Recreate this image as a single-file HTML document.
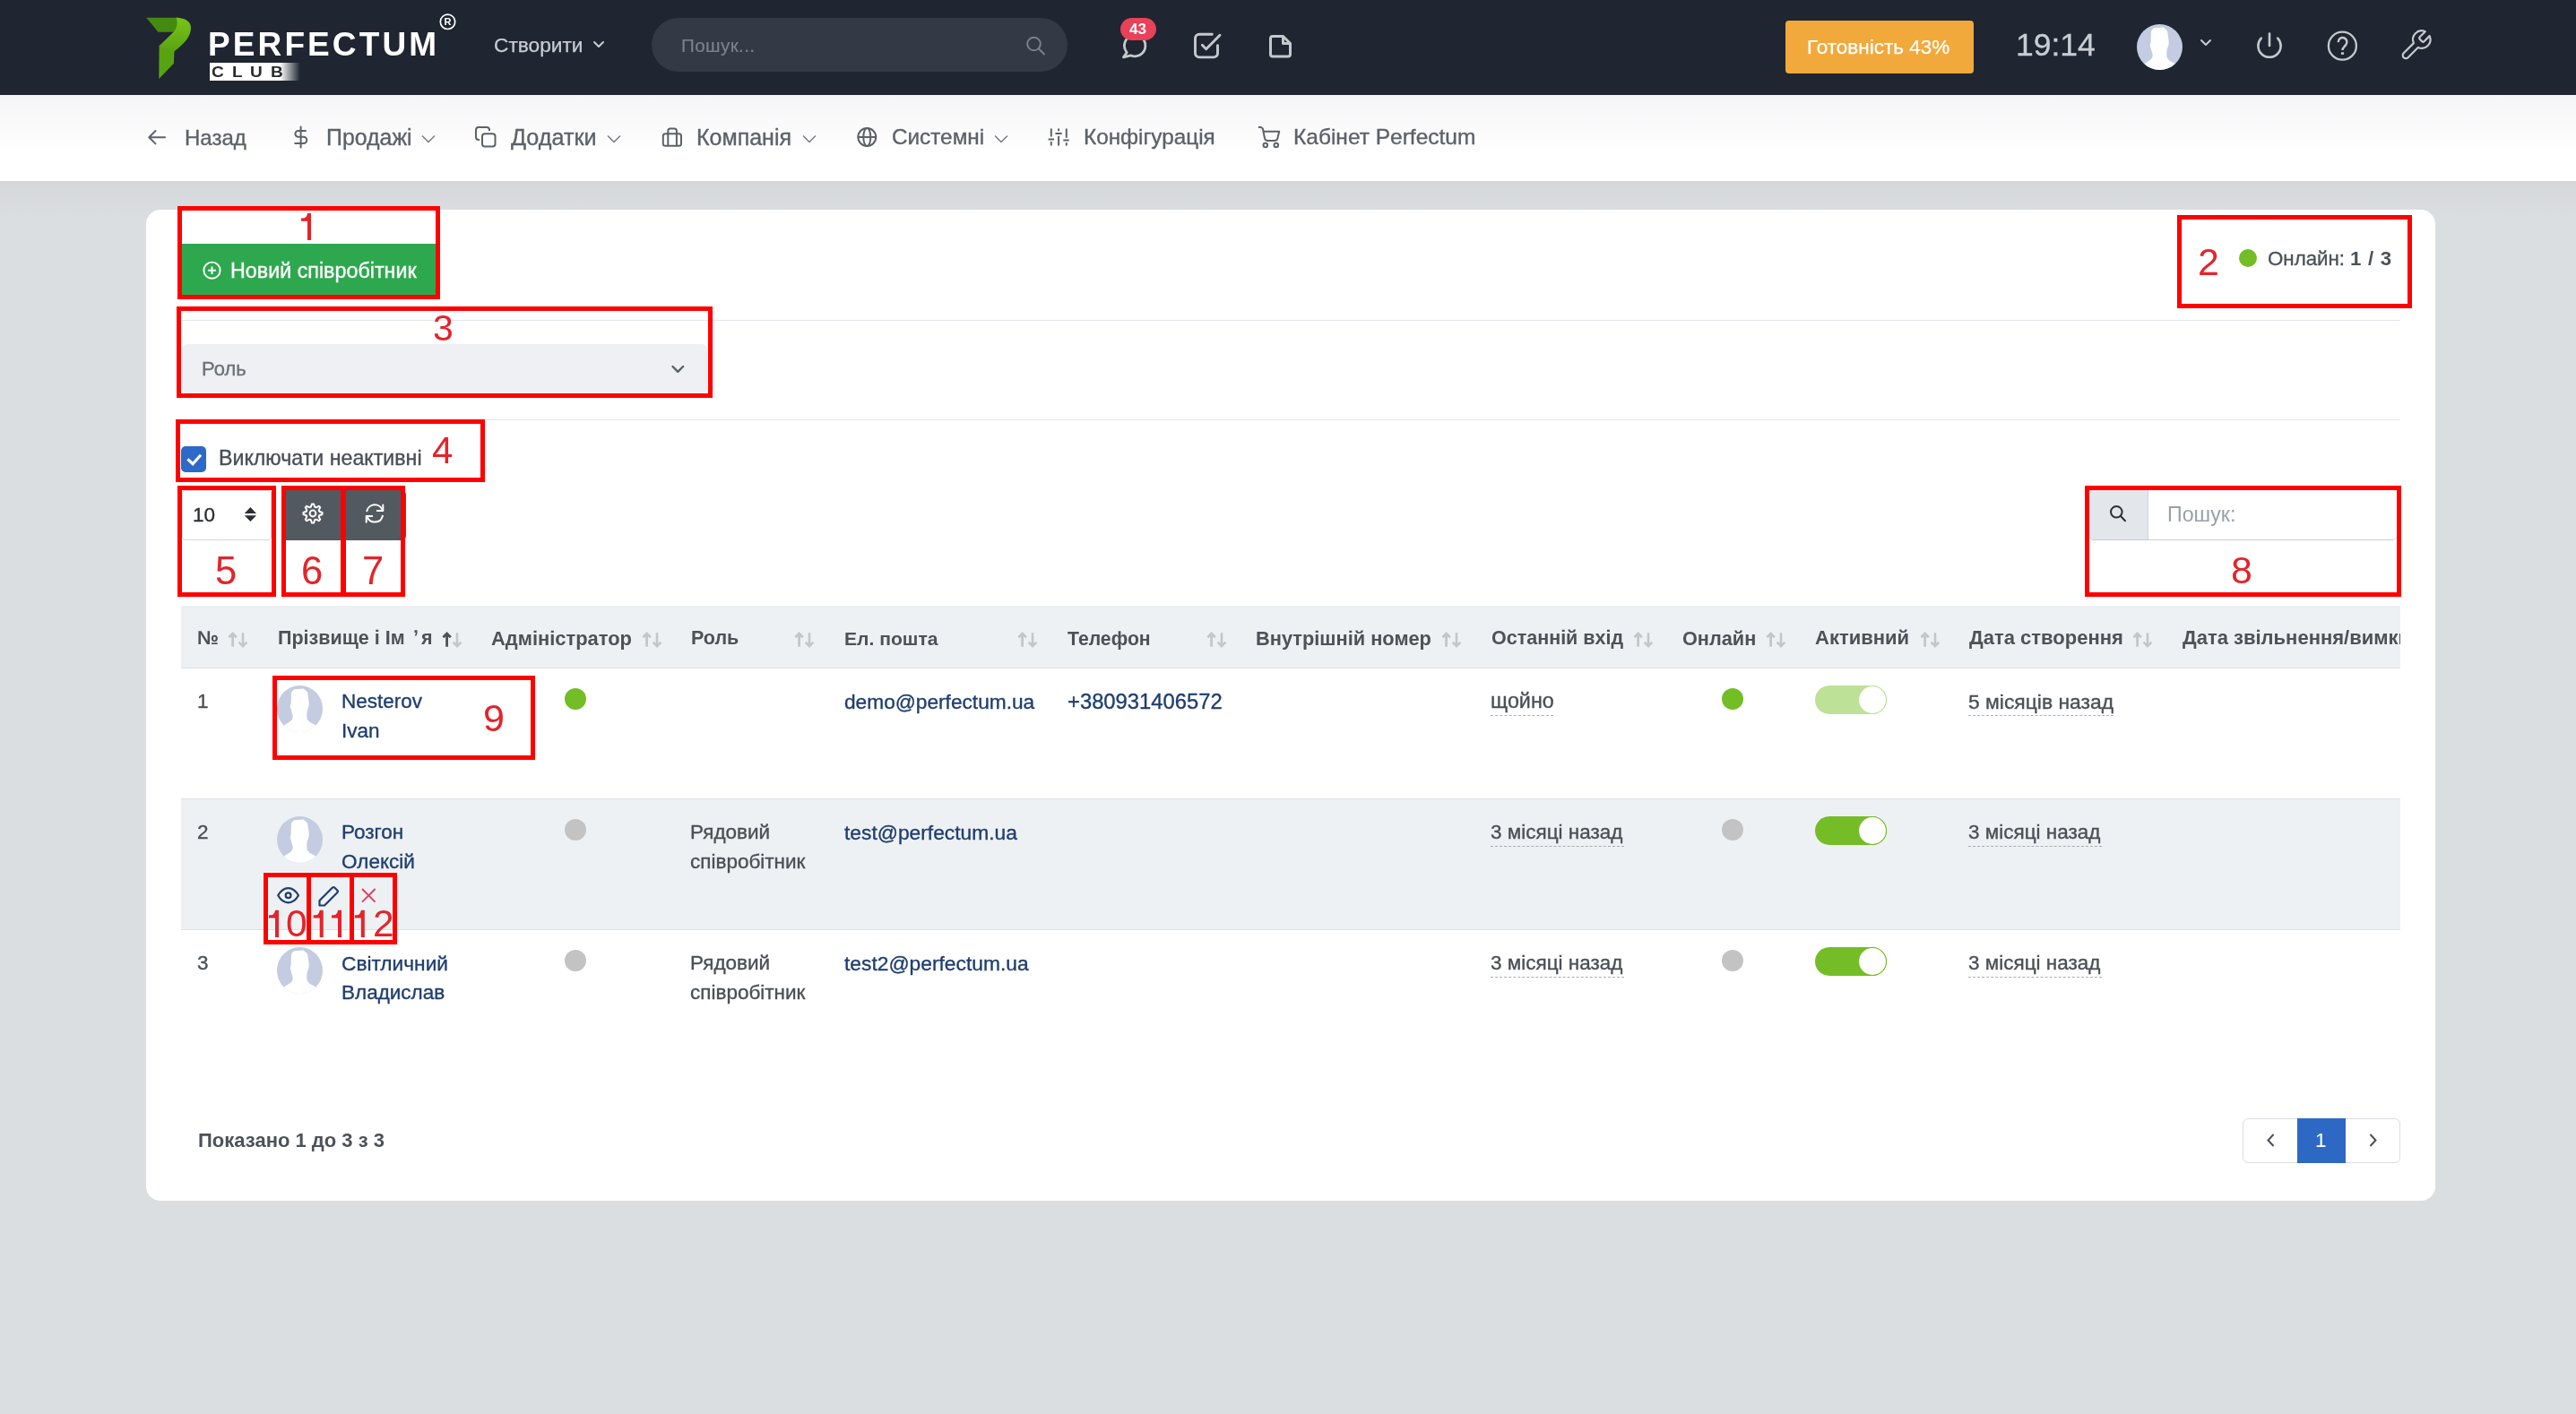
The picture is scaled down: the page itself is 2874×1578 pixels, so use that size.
<!DOCTYPE html><html><head><meta charset="utf-8"><style>
html,body{margin:0;padding:0;}
body{width:2874px;height:1578px;overflow:hidden;position:relative;font-family:"Liberation Sans",sans-serif;background:#d9dcdf}
.t{position:absolute;white-space:nowrap;line-height:1;will-change:transform}
.r{position:absolute}
</style></head><body>
<div class="r" style="left:0px;top:0px;width:2874px;height:106px;background:#1f2531"></div>
<div class="r" style="left:0px;top:106px;width:2874px;height:96px;background:linear-gradient(#f5f5f7,#fff 70%)"></div>
<div class="r" style="left:0px;top:202px;width:2874px;height:1376px;background:linear-gradient(#d5d7da,#dbdee0 40px)"></div>
<svg class="r" style="left:155px;top:12px;" width="80" height="84" viewBox="0 0 80 84"><defs><linearGradient id="lg1" x1="0" y1="0" x2="0" y2="1"><stop offset="0" stop-color="#79c41a"/><stop offset="1" stop-color="#5aa312"/></linearGradient></defs><path d="M22.6,38.5 L39.5,44 L38.9,58.8 L22.3,76 Z" fill="#58a312"/><path d="M8.3,7.7 L44,7.7 L44,23.8 L21.4,23.8 Z" fill="#458a10"/><path d="M41.6,7.7 C52,8 58,12 58,19 C58,28 52,36 39.2,45.4 L22.6,39.2 L38.6,23.8 C43,19.5 43.5,12 41.6,7.7 Z" fill="url(#lg1)"/></svg>
<div class="t" style="left:232.0px;top:30.7px;font-size:37px;color:#fff;font-weight:700;letter-spacing:3.1px">PERFECTUM</div>
<svg class="r" style="left:488px;top:13px;" width="23" height="23" viewBox="0 0 23 23"><circle cx="11.5" cy="11.3" r="8.2" fill="none" stroke="#fff" stroke-width="1.7"/><text x="11.6" y="15.3" text-anchor="middle" font-family="Liberation Sans" font-weight="700" font-size="11" fill="#fff">R</text></svg>
<div class="r" style="left:234px;top:70px;width:103px;height:20px;background:linear-gradient(90deg,#fff 0,#fff 76%,rgba(255,255,255,0) 98%)"></div>
<div class="t" style="left:236.2px;top:72.1px;font-size:17px;color:#2a2a2a;font-weight:700;transform:scaleX(1.12);transform-origin:0 0">C</div>
<div class="t" style="left:258.6px;top:72.1px;font-size:17px;color:#2a2a2a;font-weight:700;transform:scaleX(1.12);transform-origin:0 0">L</div>
<div class="t" style="left:279.3px;top:72.1px;font-size:17px;color:#2a2a2a;font-weight:700;transform:scaleX(1.12);transform-origin:0 0">U</div>
<div class="t" style="left:302.0px;top:72.1px;font-size:17px;color:#2a2a2a;font-weight:700;transform:scaleX(1.12);transform-origin:0 0">B</div>
<div class="t" style="left:551.0px;top:38.8px;font-size:22.7px;color:#c9cdd3;font-weight:400;-webkit-text-stroke:0.25px currentColor;">Створити</div>
<svg class="r" style="left:660px;top:44px;" width="16" height="12" viewBox="0 0 16 12"><path d="M3,3 L8,8 L13,3" fill="none" stroke="#c9cdd3" stroke-width="2" stroke-linecap="round" stroke-linejoin="round"/></svg>
<div class="r" style="left:727px;top:20px;width:464px;height:60px;background:#333a45;border-radius:30px"></div>
<div class="t" style="left:759.5px;top:40.6px;font-size:20.6px;color:#7b818a;font-weight:400;letter-spacing:0.4px;-webkit-text-stroke:0.2px currentColor;">Пошук...</div>
<svg class="r" style="left:1140px;top:36px;" width="30" height="30" viewBox="0 0 30 30"><circle cx="13.5" cy="13" r="7.3" fill="none" stroke="#7b818a" stroke-width="2"/><path d="M19,18.5 L25,24.5" stroke="#7b818a" stroke-width="2" stroke-linecap="round"/></svg>
<svg class="r" style="left:1246px;top:30px;" width="40" height="40" viewBox="0 0 40 40"><path d="M11.2,28.6 A11.7,11.7 0 1 1 15.5,31.8 L7.5,33.8 Z" fill="none" stroke="#c5c9ce" stroke-width="2.8" stroke-linejoin="round"/></svg>
<div class="r" style="left:1250px;top:20px;width:40px;height:25px;background:#e8415a;border-radius:13px"></div>
<div class="t" style="left:1260.0px;top:24.1px;font-size:17px;color:#fff;font-weight:700;">43</div>
<svg class="r" style="left:1326px;top:30px;" width="42" height="40" viewBox="0 0 42 40"><path d="M26.3,8.3 H12 A4.5,4.5 0 0 0 7.5,12.8 V29.4 A4.5,4.5 0 0 0 12,33.9 H28 A4.5,4.5 0 0 0 32.5,29.4 V20.6" fill="none" stroke="#c5c9ce" stroke-width="2.9" stroke-linecap="round"/><path d="M15.3,20.3 L19.7,24.7 L35,9.3" fill="none" stroke="#c5c9ce" stroke-width="2.9" stroke-linecap="round" stroke-linejoin="round"/></svg>
<svg class="r" style="left:1410px;top:34px;" width="36" height="34" viewBox="0 0 36 34"><path d="M10,6.5 H21.5 L29.5,14.5 V26.5 A2.5,2.5 0 0 1 27,29 H10 A2.5,2.5 0 0 1 7.5,26.5 V9 A2.5,2.5 0 0 1 10,6.5 Z" fill="none" stroke="#c5c9ce" stroke-width="3" stroke-linejoin="round"/><path d="M21.5,6.5 V14.5 H29.5" fill="none" stroke="#c5c9ce" stroke-width="3" stroke-linejoin="round"/></svg>
<div class="r" style="left:1992px;top:23px;width:210px;height:59px;background:#f2a93b;border-radius:4px"></div>
<div class="t" style="left:2016.0px;top:41.9px;font-size:22.5px;color:#fff;font-weight:400;-webkit-text-stroke:0.25px currentColor;">Готовність 43%</div>
<div class="t" style="left:2249.0px;top:32.9px;font-size:35.5px;color:#c9cdd3;font-weight:400;-webkit-text-stroke:0.3px currentColor;">19:14</div>
<svg class="r" style="left:2384px;top:27px;" width="51" height="51" viewBox="0 0 51 51"><clipPath id="ca"><circle cx="25.5" cy="25.5" r="25.5"/></clipPath><g clip-path="url(#ca)"><rect width="51" height="51" fill="#c3cce0"/><path d="M9.2,43.4 C12,41.5 15,40.5 16.8,37.9 C17.8,36 17.8,34 17.6,33.2 C17,31 16,29.5 15.8,27 C15,25 14.5,23 14.9,22.2 C15.5,21 15.7,20 15.7,19.6 L15.9,9 C16.5,6 18,4.8 19.8,4.3 L29.9,3.5 L30.8,4.8 C33,6 34.2,7.5 34.2,8.6 L35,14.1 C35.5,17 35.8,20 35.7,21.3 C35.5,24 34.5,25.5 34.2,26.8 C33.5,29 33.3,31 33.3,32.3 C33.3,34.5 33.5,36 33.8,37.4 C35,39.5 37,41 38.4,41.7 L42.2,43.8 L51,52 L0,52 Z" fill="#fff"/></g></svg>
<svg class="r" style="left:2450px;top:40px;" width="22" height="16" viewBox="0 0 22 16"><path d="M6,5 L11,10 L16,5" fill="none" stroke="#c9cdd3" stroke-width="2" stroke-linecap="round" stroke-linejoin="round"/></svg>
<svg class="r" style="left:2512px;top:30px;" width="40" height="42" viewBox="0 0 40 42"><path d="M10.8,12.6 A12.6,12.6 0 1 0 29.2,12.6" fill="none" stroke="#c5c9ce" stroke-width="2.6" stroke-linecap="round"/><path d="M20,7.5 V21" stroke="#c5c9ce" stroke-width="2.6" stroke-linecap="round"/></svg>
<svg class="r" style="left:2592px;top:30px;" width="44" height="42" viewBox="0 0 44 42"><circle cx="21.4" cy="21.2" r="15.5" fill="none" stroke="#c5c9ce" stroke-width="2.3"/><path d="M16.8,17.2 A4.8,4.8 0 1 1 25.2,20 C24,22 21.5,23 21.5,26" fill="none" stroke="#c5c9ce" stroke-width="2.5"/><rect x="19.9" y="28.3" width="3.2" height="2.6" fill="#c5c9ce"/></svg>
<svg class="r" style="left:2674px;top:30px;" width="42" height="42" viewBox="0 0 42 42"><g transform="translate(1.85,1.15) scale(1.62)"><path d="M14.7 6.3a1 1 0 0 0 0 1.4l1.6 1.6a1 1 0 0 0 1.4 0l3.77-3.77a6 6 0 0 1-7.940 7.940l-6.910 6.910a2.120 2.120 0 0 1-3-3l6.910-6.910a6 6 0 0 1 7.940-7.940l-3.760 3.760z" fill="none" stroke="#c5c9ce" stroke-width="1.36" stroke-linecap="round" stroke-linejoin="round"/></g></svg>
<svg class="r" style="left:160px;top:140px;" width="30" height="28" viewBox="0 0 30 28"><path d="M24,13.2 H6.5 M13.5,6 L6.3,13.2 L13.5,20.4" fill="none" stroke="#5d6168" stroke-width="2" stroke-linecap="round" stroke-linejoin="round"/></svg>
<div class="t" style="left:206.0px;top:141.7px;font-size:24px;color:#5d6168;font-weight:400;-webkit-text-stroke:0.35px currentColor;">Назад</div>
<svg class="r" style="left:322px;top:138px;" width="28" height="30" viewBox="0 0 28 30"><path d="M13.6,3.5 V26.5 M18.9,7.9 H10.8 A3.4,3.4 0 0 0 10.8,14.7 H16.6 A3.65,3.65 0 0 1 16.6,22 H7.2" fill="none" stroke="#5d6168" stroke-width="2" stroke-linecap="round"/></svg>
<div class="t" style="left:364.0px;top:140.9px;font-size:24.9px;color:#5d6168;font-weight:400;-webkit-text-stroke:0.35px currentColor;">Продажі</div>
<svg class="r" style="left:469px;top:149px;" width="18" height="12" viewBox="0 0 18 12"><path d="M2,2.5 L9,9.5 L16,2.5" fill="none" stroke="#73777e" stroke-width="1.4"/></svg>
<svg class="r" style="left:526px;top:138px;" width="32" height="30" viewBox="0 0 32 30"><rect x="12" y="11.3" width="14.5" height="14.2" rx="3" fill="none" stroke="#5d6168" stroke-width="2"/><path d="M9,18 H8 A3,3 0 0 1 5,15 V7 A3,3 0 0 1 8,4 H17 A3,3 0 0 1 20,7 V8" fill="none" stroke="#5d6168" stroke-width="2"/></svg>
<div class="t" style="left:570.0px;top:140.7px;font-size:25.2px;color:#5d6168;font-weight:400;-webkit-text-stroke:0.35px currentColor;">Додатки</div>
<svg class="r" style="left:676px;top:149px;" width="18" height="12" viewBox="0 0 18 12"><path d="M2,2.5 L9,9.5 L16,2.5" fill="none" stroke="#73777e" stroke-width="1.4"/></svg>
<svg class="r" style="left:734px;top:138px;" width="32" height="30" viewBox="0 0 32 30"><rect x="5.8" y="11.3" width="20.2" height="13.4" rx="2.5" fill="none" stroke="#5d6168" stroke-width="2"/><path d="M11.3,24 V8 A2.5,2.5 0 0 1 13.8,5.5 H18.4 A2.5,2.5 0 0 1 20.9,8 V24" fill="none" stroke="#5d6168" stroke-width="2"/></svg>
<div class="t" style="left:777.0px;top:140.8px;font-size:25px;color:#5d6168;font-weight:400;-webkit-text-stroke:0.35px currentColor;">Компанія</div>
<svg class="r" style="left:894px;top:149px;" width="18" height="12" viewBox="0 0 18 12"><path d="M2,2.5 L9,9.5 L16,2.5" fill="none" stroke="#73777e" stroke-width="1.4"/></svg>
<svg class="r" style="left:952px;top:138px;" width="32" height="30" viewBox="0 0 32 30"><circle cx="15.3" cy="15" r="10" fill="none" stroke="#5d6168" stroke-width="2"/><ellipse cx="15.3" cy="15" rx="4" ry="10" fill="none" stroke="#5d6168" stroke-width="2"/><path d="M5.3,15 H25.3" stroke="#5d6168" stroke-width="2"/></svg>
<div class="t" style="left:995.0px;top:141.4px;font-size:24.3px;color:#5d6168;font-weight:400;-webkit-text-stroke:0.35px currentColor;">Системні</div>
<svg class="r" style="left:1108px;top:149px;" width="18" height="12" viewBox="0 0 18 12"><path d="M2,2.5 L9,9.5 L16,2.5" fill="none" stroke="#73777e" stroke-width="1.4"/></svg>
<svg class="r" style="left:1166px;top:138px;" width="30" height="30" viewBox="0 0 30 30"><path d="M6.8,5.6 V14.5 M6.8,20 V24.6 M15.1,5.6 V8.3 M15.1,13.8 V24.6 M23.8,5.6 V15.8 M23.8,21.3 V24.6 M3.6,17.5 H10 M11.5,11 H18.7 M20.3,18.6 H26.7" fill="none" stroke="#5d6168" stroke-width="2"/></svg>
<div class="t" style="left:1209.0px;top:141.4px;font-size:24.3px;color:#5d6168;font-weight:400;-webkit-text-stroke:0.35px currentColor;">Конфігурація</div>
<svg class="r" style="left:1400px;top:138px;" width="32" height="30" viewBox="0 0 32 30"><path d="M4,4 H6 A3.2,3.2 0 0 1 9.2,7.2 L9.7,8.8 H27.2 L25.3,16.5 A3.5,3.5 0 0 1 21.8,19 H14.5 A3.5,3.5 0 0 1 11,16.3 L9.4,8.5" fill="none" stroke="#5d6168" stroke-width="2" stroke-linejoin="round"/><circle cx="11.8" cy="24" r="2.3" fill="none" stroke="#5d6168" stroke-width="2"/><circle cx="23.8" cy="24" r="2.3" fill="none" stroke="#5d6168" stroke-width="2"/></svg>
<div class="t" style="left:1443.0px;top:141.3px;font-size:24.5px;color:#5d6168;font-weight:400;-webkit-text-stroke:0.35px currentColor;">Кабінет Perfectum</div>
<div class="r" style="left:163px;top:234px;width:2554px;height:1106px;background:#fff;border-radius:16px"></div>
<div class="r" style="left:203px;top:272px;width:283px;height:58px;background:#2ea84f"></div>
<svg class="r" style="left:222px;top:287px;" width="30" height="30" viewBox="0 0 30 30"><circle cx="14.5" cy="14.7" r="9.1" fill="none" stroke="#fff" stroke-width="1.9"/><path d="M14.5,10.4 V19 M10.2,14.7 H18.8" stroke="#fff" stroke-width="1.9"/></svg>
<div class="t" style="left:256.5px;top:291.3px;font-size:23.3px;color:#fff;font-weight:400;-webkit-text-stroke:0.35px currentColor;">Новий співробітник</div>
<div class="r" style="left:198px;top:230px;width:293px;height:104px;border:5px solid #f00;box-sizing:border-box;"></div>
<svg class="r" style="left:0;top:0" width="2874" height="1578"><path d="M347,238.1 V267.9 H343 V246.79999999999998 H336 V243.6 H338 C340.5,243.6 342.4,242.1 343,238.1 Z" fill="#e3242b"/></svg>
<div class="r" style="left:2498px;top:278px;width:20px;height:20px;background:#73bd27;border-radius:50%"></div>
<div class="t" style="left:2530.0px;top:278.1px;font-size:22.3px;color:#4d5258;font-weight:400;-webkit-text-stroke:0.35px currentColor;">Онлайн:</div>
<div class="t" style="left:2622.0px;top:278.1px;font-size:22.3px;color:#4d5258;font-weight:700;letter-spacing:0.7px">1 / 3</div>
<div class="r" style="left:2429px;top:240px;width:262px;height:104px;border:5px solid #f00;box-sizing:border-box;"></div>
<div class="t" style="left:2452.0px;top:271.1px;font-size:43px;color:#e3242b;font-weight:400;">2</div>
<div class="r" style="left:203px;top:357px;width:2475px;height:1px;background:#e3e5e8"></div>
<div class="r" style="left:203px;top:384px;width:586px;height:55px;background:#eef0f3;border-radius:6px"></div>
<div class="t" style="left:225.0px;top:401.4px;font-size:22px;color:#6c7079;font-weight:400;-webkit-text-stroke:0.35px currentColor;">Роль</div>
<svg class="r" style="left:744px;top:402px;" width="24" height="20" viewBox="0 0 24 20"><path d="M6.5,7 L12.3,12.8 L18.1,7" fill="none" stroke="#5b6068" stroke-width="2.4" stroke-linecap="round" stroke-linejoin="round"/></svg>
<div class="r" style="left:197px;top:342px;width:598px;height:102px;border:5px solid #f00;box-sizing:border-box;"></div>
<div class="t" style="left:482.5px;top:346.3px;font-size:41px;color:#e3242b;font-weight:400;">3</div>
<div class="r" style="left:203px;top:468px;width:2475px;height:1px;background:#e3e5e8"></div>
<div class="r" style="left:202px;top:498px;width:28px;height:29px;background:#2d69c8;border-radius:5px"></div>
<svg class="r" style="left:202px;top:498px;" width="28" height="29" viewBox="0 0 28 29"><path d="M7.4,14.3 L13.1,19.7 L22,9.8" fill="none" stroke="#fff" stroke-width="3.2"/></svg>
<div class="t" style="left:243.5px;top:500.4px;font-size:23.2px;color:#4a4f55;font-weight:400;-webkit-text-stroke:0.35px currentColor;">Виключати неактивні</div>
<div class="r" style="left:196px;top:468px;width:345px;height:70px;border:5px solid #f00;box-sizing:border-box;"></div>
<div class="t" style="left:482.0px;top:482.4px;font-size:42px;color:#e3242b;font-weight:400;">4</div>
<div class="r" style="left:203px;top:547px;width:100px;height:56px;background:#fff;border:1px solid #d5d9dd;border-radius:4px;box-sizing:border-box"></div>
<div class="t" style="left:215.0px;top:563.5px;font-size:22.5px;color:#2b2f33;font-weight:400;-webkit-text-stroke:0.35px currentColor;">10</div>
<svg class="r" style="left:268px;top:562px;" width="22" height="24" viewBox="0 0 22 24"><path d="M4.8,11 L11.4,4 L18,11 Z M4.8,13.3 L11.4,20 L18,13.3 Z" fill="#2b2f33"/></svg>
<div class="r" style="left:198px;top:542px;width:110px;height:124px;border:5px solid #f00;box-sizing:border-box;"></div>
<div class="t" style="left:240.0px;top:616.2px;font-size:43.5px;color:#e3242b;font-weight:400;">5</div>
<div class="r" style="left:319px;top:547px;width:134px;height:56px;background:#535960;border-radius:0 5px 5px 0"></div>
<svg class="r" style="left:333px;top:557px;" width="32" height="32" viewBox="0 0 32 32"><path d="M14.96,5.45 L17.04,5.45 L18.21,8.73 L19.58,9.30 L22.72,7.81 L24.19,9.28 L22.70,12.42 L23.27,13.79 L26.55,14.96 L26.55,17.04 L23.27,18.21 L22.70,19.58 L24.19,22.72 L22.72,24.19 L19.58,22.70 L18.21,23.27 L17.04,26.55 L14.96,26.55 L13.79,23.27 L12.42,22.70 L9.28,24.19 L7.81,22.72 L9.30,19.58 L8.73,18.21 L5.45,17.04 L5.45,14.96 L8.73,13.79 L9.30,12.42 L7.81,9.28 L9.28,7.81 L12.42,9.30 L13.79,8.73Z" fill="none" stroke="#fff" stroke-width="2" stroke-linejoin="round"/><circle cx="16" cy="16" r="3.4" fill="none" stroke="#fff" stroke-width="2"/></svg>
<svg class="r" style="left:402px;top:557px;" width="32" height="32" viewBox="0 0 32 32"><path d="M7.3,13.3 A9,9 0 0 1 24.6,12.5 M24.9,18.7 A9,9 0 0 1 7.7,19.7" fill="none" stroke="#fff" stroke-width="2" stroke-linecap="round"/><path d="M25.3,6.5 V13 H18.8 M6.7,25.7 V19 H13.2" fill="none" stroke="#fff" stroke-width="2" stroke-linecap="round" stroke-linejoin="round"/></svg>
<div class="r" style="left:314px;top:542px;width:72px;height:124px;border:5px solid #f00;box-sizing:border-box;"></div>
<div class="r" style="left:380px;top:542px;width:72px;height:124px;border:5px solid #f00;box-sizing:border-box;"></div>
<div class="t" style="left:336.0px;top:616.2px;font-size:43.5px;color:#e3242b;font-weight:400;">6</div>
<div class="t" style="left:404.0px;top:616.2px;font-size:43.5px;color:#e3242b;font-weight:400;">7</div>
<div class="r" style="left:2331px;top:547px;width:343px;height:56px;background:#fff;border-bottom:1.5px solid #c9cdd2;border-radius:0 0 5px 5px;box-sizing:border-box"></div>
<div class="r" style="left:2331px;top:547px;width:66px;height:56px;background:#e3e6ea;border-bottom:1.5px solid #c9cdd2;border-radius:0 0 0 5px;box-sizing:border-box"></div>
<div class="r" style="left:2396px;top:547px;width:1px;height:56px;background:#cfd3d8"></div>
<svg class="r" style="left:2348px;top:558px;" width="30" height="30" viewBox="0 0 30 30"><circle cx="13.3" cy="13.3" r="6.3" fill="none" stroke="#2b2f33" stroke-width="2"/><path d="M18,18 L23,23.3" stroke="#2b2f33" stroke-width="2" stroke-linecap="round"/></svg>
<div class="t" style="left:2418.0px;top:562.7px;font-size:23.2px;color:#9aa0a8;font-weight:400;">Пошук:</div>
<div class="r" style="left:2326px;top:542px;width:353px;height:124px;border:5px solid #f00;box-sizing:border-box;"></div>
<div class="t" style="left:2489.0px;top:615.1px;font-size:43px;color:#e3242b;font-weight:400;">8</div>
<div class="r" style="left:202px;top:676px;width:2476px;height:70px;background:#eef1f4"></div>
<div class="r" style="left:202px;top:745px;width:2476px;height:1px;background:#dcdfe3"></div>
<div class="t" style="left:219.5px;top:701.8px;font-size:21.5px;color:#4d5258;font-weight:700;">№</div>
<svg class="r" style="left:253.5px;top:703px;" width="24" height="22" viewBox="0 0 24 22"><path d="M5.6,18.7 V4 M1.4,8.3 L5.6,4 L9.8,8.3" fill="none" stroke="#c3c6ca" stroke-width="2.8"/><path d="M17,3.3 V18.3 M12.6,13.6 L17,18.1 L21.4,13.6" fill="none" stroke="#c3c6ca" stroke-width="2.6"/></svg>
<div class="t" style="left:309.5px;top:701.8px;font-size:21.5px;color:#4d5258;font-weight:700;">Прізвище і Ім</div>
<svg class="r" style="left:492.8px;top:703px;" width="24" height="22" viewBox="0 0 24 22"><path d="M5.6,18.7 V4 M1.4,8.3 L5.6,4 L9.8,8.3" fill="none" stroke="#4d5258" stroke-width="2.8"/><path d="M17,3.3 V18.3 M12.6,13.6 L17,18.1 L21.4,13.6" fill="none" stroke="#c3c6ca" stroke-width="2.6"/></svg>
<div class="t" style="left:548.0px;top:701.5px;font-size:21.9px;color:#4d5258;font-weight:700;">Адміністратор</div>
<svg class="r" style="left:715.5px;top:703px;" width="24" height="22" viewBox="0 0 24 22"><path d="M5.6,18.7 V4 M1.4,8.3 L5.6,4 L9.8,8.3" fill="none" stroke="#c3c6ca" stroke-width="2.8"/><path d="M17,3.3 V18.3 M12.6,13.6 L17,18.1 L21.4,13.6" fill="none" stroke="#c3c6ca" stroke-width="2.6"/></svg>
<div class="t" style="left:770.5px;top:701.8px;font-size:21.5px;color:#4d5258;font-weight:700;">Роль</div>
<svg class="r" style="left:886.4px;top:703px;" width="24" height="22" viewBox="0 0 24 22"><path d="M5.6,18.7 V4 M1.4,8.3 L5.6,4 L9.8,8.3" fill="none" stroke="#c3c6ca" stroke-width="2.8"/><path d="M17,3.3 V18.3 M12.6,13.6 L17,18.1 L21.4,13.6" fill="none" stroke="#c3c6ca" stroke-width="2.6"/></svg>
<div class="t" style="left:942.0px;top:702.1px;font-size:21.1px;color:#4d5258;font-weight:700;">Ел. пошта</div>
<svg class="r" style="left:1134.9px;top:703px;" width="24" height="22" viewBox="0 0 24 22"><path d="M5.6,18.7 V4 M1.4,8.3 L5.6,4 L9.8,8.3" fill="none" stroke="#c3c6ca" stroke-width="2.8"/><path d="M17,3.3 V18.3 M12.6,13.6 L17,18.1 L21.4,13.6" fill="none" stroke="#c3c6ca" stroke-width="2.6"/></svg>
<div class="t" style="left:1191.0px;top:702.0px;font-size:21.2px;color:#4d5258;font-weight:700;">Телефон</div>
<svg class="r" style="left:1345.6px;top:703px;" width="24" height="22" viewBox="0 0 24 22"><path d="M5.6,18.7 V4 M1.4,8.3 L5.6,4 L9.8,8.3" fill="none" stroke="#c3c6ca" stroke-width="2.8"/><path d="M17,3.3 V18.3 M12.6,13.6 L17,18.1 L21.4,13.6" fill="none" stroke="#c3c6ca" stroke-width="2.6"/></svg>
<div class="t" style="left:1400.5px;top:701.5px;font-size:21.8px;color:#4d5258;font-weight:700;">Внутрішній номер</div>
<svg class="r" style="left:1607.6px;top:703px;" width="24" height="22" viewBox="0 0 24 22"><path d="M5.6,18.7 V4 M1.4,8.3 L5.6,4 L9.8,8.3" fill="none" stroke="#c3c6ca" stroke-width="2.8"/><path d="M17,3.3 V18.3 M12.6,13.6 L17,18.1 L21.4,13.6" fill="none" stroke="#c3c6ca" stroke-width="2.6"/></svg>
<div class="t" style="left:1663.5px;top:701.8px;font-size:21.5px;color:#4d5258;font-weight:700;">Останній вхід</div>
<svg class="r" style="left:1821.5px;top:703px;" width="24" height="22" viewBox="0 0 24 22"><path d="M5.6,18.7 V4 M1.4,8.3 L5.6,4 L9.8,8.3" fill="none" stroke="#c3c6ca" stroke-width="2.8"/><path d="M17,3.3 V18.3 M12.6,13.6 L17,18.1 L21.4,13.6" fill="none" stroke="#c3c6ca" stroke-width="2.6"/></svg>
<div class="t" style="left:1876.5px;top:701.6px;font-size:21.7px;color:#4d5258;font-weight:700;">Онлайн</div>
<svg class="r" style="left:1969.6px;top:703px;" width="24" height="22" viewBox="0 0 24 22"><path d="M5.6,18.7 V4 M1.4,8.3 L5.6,4 L9.8,8.3" fill="none" stroke="#c3c6ca" stroke-width="2.8"/><path d="M17,3.3 V18.3 M12.6,13.6 L17,18.1 L21.4,13.6" fill="none" stroke="#c3c6ca" stroke-width="2.6"/></svg>
<div class="t" style="left:2025.0px;top:701.4px;font-size:22px;color:#4d5258;font-weight:700;">Активний</div>
<svg class="r" style="left:2141.7px;top:703px;" width="24" height="22" viewBox="0 0 24 22"><path d="M5.6,18.7 V4 M1.4,8.3 L5.6,4 L9.8,8.3" fill="none" stroke="#c3c6ca" stroke-width="2.8"/><path d="M17,3.3 V18.3 M12.6,13.6 L17,18.1 L21.4,13.6" fill="none" stroke="#c3c6ca" stroke-width="2.6"/></svg>
<div class="t" style="left:2196.5px;top:701.4px;font-size:22px;color:#4d5258;font-weight:700;">Дата створення</div>
<svg class="r" style="left:2378.7px;top:703px;" width="24" height="22" viewBox="0 0 24 22"><path d="M5.6,18.7 V4 M1.4,8.3 L5.6,4 L9.8,8.3" fill="none" stroke="#c3c6ca" stroke-width="2.8"/><path d="M17,3.3 V18.3 M12.6,13.6 L17,18.1 L21.4,13.6" fill="none" stroke="#c3c6ca" stroke-width="2.6"/></svg>
<div class="t" style="left:461.0px;top:701.8px;font-size:21.5px;color:#4d5258;font-weight:700;">ʼ</div>
<div class="t" style="left:470.0px;top:701.8px;font-size:21.5px;color:#4d5258;font-weight:700;">я</div>
<div class="r" style="left:2430px;top:690px;width:248px;height:45px;overflow:hidden">
<div class="t" style="left:5.0px;top:11.4px;font-size:22px;color:#4d5258;font-weight:700;">Дата звільнення/вимкнення</div>
</div>
<div class="r" style="left:202px;top:891px;width:2476px;height:1px;background:#dcdfe3"></div>
<div class="r" style="left:202px;top:892px;width:2476px;height:145px;background:#eef1f4"></div>
<div class="r" style="left:202px;top:1037px;width:2476px;height:1px;background:#dcdfe3"></div>
<div class="t" style="left:219.5px;top:771.9px;font-size:22.5px;color:#4a4f55;font-weight:400;-webkit-text-stroke:0.35px currentColor;">1</div>
<svg class="r" style="left:309px;top:765px;" width="51" height="52" viewBox="0 0 51 52"><clipPath id="cav765"><ellipse cx="25.5" cy="26" rx="25.5" ry="26"/></clipPath><g clip-path="url(#cav765)"><rect width="51" height="52" fill="#c3cce0"/><path d="M9.2,43.4 C12,41.5 15,40.5 16.8,37.9 C17.8,36 17.8,34 17.6,33.2 C17,31 16,29.5 15.8,27 C15,25 14.5,23 14.9,22.2 C15.5,21 15.7,20 15.7,19.6 L15.9,9 C16.5,6 18,4.8 19.8,4.3 L29.9,3.5 L30.8,4.8 C33,6 34.2,7.5 34.2,8.6 L35,14.1 C35.5,17 35.8,20 35.7,21.3 C35.5,24 34.5,25.5 34.2,26.8 C33.5,29 33.3,31 33.3,32.3 C33.3,34.5 33.5,36 33.8,37.4 C35,39.5 37,41 38.4,41.7 L42.2,43.8 L51,52 L0,52 Z" fill="#fff"/></g></svg>
<div class="t" style="left:381.0px;top:771.9px;font-size:22.5px;color:#1f3e6d;font-weight:400;-webkit-text-stroke:0.35px currentColor;">Nesterov</div>
<div class="t" style="left:381.0px;top:804.9px;font-size:22.5px;color:#1f3e6d;font-weight:400;-webkit-text-stroke:0.35px currentColor;">Ivan</div>
<div class="r" style="left:630px;top:768px;width:24px;height:24px;background:#73bd27;border-radius:50%"></div>
<div class="t" style="left:942.0px;top:771.8px;font-size:22.7px;color:#1f3e6d;font-weight:400;-webkit-text-stroke:0.35px currentColor;">demo@perfectum.ua</div>
<div class="t" style="left:1190.5px;top:770.8px;font-size:23.8px;color:#1f3e6d;font-weight:400;-webkit-text-stroke:0.35px currentColor;">+380931406572</div>
<div class="t" style="left:1663.0px;top:771.3px;font-size:23.3px;color:#4a4f55;font-weight:400;-webkit-text-stroke:0.35px currentColor;">щойно</div>
<div class="r" style="left:1663px;top:798px;width:70px;height:1px;border-top:1px dashed #a9adb2;height:0"></div>
<div class="r" style="left:1921px;top:768px;width:24px;height:24px;background:#73bd27;border-radius:50%"></div>
<div class="r" style="left:2025px;top:765px;width:80px;height:32px;background:#bde196;border-radius:16px"></div>
<div class="r" style="left:2074px;top:766px;width:30px;height:30px;background:#fff;border-radius:50%;box-shadow:0 0 0 1px #bde196"></div>
<div class="t" style="left:2196.0px;top:771.6px;font-size:22.9px;color:#4a4f55;font-weight:400;-webkit-text-stroke:0.35px currentColor;">5 місяців назад</div>
<div class="r" style="left:2196px;top:798px;width:162px;height:1px;border-top:1px dashed #a9adb2;height:0"></div>
<div class="t" style="left:219.5px;top:917.9px;font-size:22.5px;color:#4a4f55;font-weight:400;-webkit-text-stroke:0.35px currentColor;">2</div>
<svg class="r" style="left:309px;top:911px;" width="51" height="52" viewBox="0 0 51 52"><clipPath id="cav911"><ellipse cx="25.5" cy="26" rx="25.5" ry="26"/></clipPath><g clip-path="url(#cav911)"><rect width="51" height="52" fill="#c3cce0"/><path d="M9.2,43.4 C12,41.5 15,40.5 16.8,37.9 C17.8,36 17.8,34 17.6,33.2 C17,31 16,29.5 15.8,27 C15,25 14.5,23 14.9,22.2 C15.5,21 15.7,20 15.7,19.6 L15.9,9 C16.5,6 18,4.8 19.8,4.3 L29.9,3.5 L30.8,4.8 C33,6 34.2,7.5 34.2,8.6 L35,14.1 C35.5,17 35.8,20 35.7,21.3 C35.5,24 34.5,25.5 34.2,26.8 C33.5,29 33.3,31 33.3,32.3 C33.3,34.5 33.5,36 33.8,37.4 C35,39.5 37,41 38.4,41.7 L42.2,43.8 L51,52 L0,52 Z" fill="#fff"/></g></svg>
<div class="t" style="left:381.0px;top:917.9px;font-size:22.5px;color:#1f3e6d;font-weight:400;-webkit-text-stroke:0.35px currentColor;">Розгон</div>
<div class="t" style="left:381.0px;top:950.9px;font-size:22.5px;color:#1f3e6d;font-weight:400;-webkit-text-stroke:0.35px currentColor;">Олексій</div>
<div class="r" style="left:630px;top:914px;width:24px;height:24px;background:#c3c3c3;border-radius:50%"></div>
<div class="t" style="left:770.0px;top:917.9px;font-size:22.5px;color:#4a4f55;font-weight:400;-webkit-text-stroke:0.35px currentColor;">Рядовий</div>
<div class="t" style="left:770.0px;top:950.9px;font-size:22.5px;color:#4a4f55;font-weight:400;-webkit-text-stroke:0.35px currentColor;">співробітник</div>
<div class="t" style="left:942.0px;top:917.7px;font-size:22.8px;color:#1f3e6d;font-weight:400;-webkit-text-stroke:0.35px currentColor;">test@perfectum.ua</div>
<div class="t" style="left:1663.0px;top:917.9px;font-size:22.5px;color:#4a4f55;font-weight:400;-webkit-text-stroke:0.35px currentColor;">3 місяці назад</div>
<div class="r" style="left:1663px;top:944px;width:149px;height:1px;border-top:1px dashed #a9adb2;height:0"></div>
<div class="r" style="left:1921px;top:914px;width:24px;height:24px;background:#c3c3c3;border-radius:50%"></div>
<div class="r" style="left:2025px;top:911px;width:80px;height:32px;background:#74bd27;border-radius:16px"></div>
<div class="r" style="left:2074px;top:912px;width:30px;height:30px;background:#fff;border-radius:50%;box-shadow:0 0 0 1px #74bd27"></div>
<div class="t" style="left:2196.0px;top:917.9px;font-size:22.5px;color:#4a4f55;font-weight:400;-webkit-text-stroke:0.35px currentColor;">3 місяці назад</div>
<div class="r" style="left:2196px;top:944px;width:149px;height:1px;border-top:1px dashed #a9adb2;height:0"></div>
<div class="t" style="left:219.5px;top:1063.9px;font-size:22.5px;color:#4a4f55;font-weight:400;-webkit-text-stroke:0.35px currentColor;">3</div>
<svg class="r" style="left:309px;top:1057px;" width="51" height="52" viewBox="0 0 51 52"><clipPath id="cav1057"><ellipse cx="25.5" cy="26" rx="25.5" ry="26"/></clipPath><g clip-path="url(#cav1057)"><rect width="51" height="52" fill="#c3cce0"/><path d="M9.2,43.4 C12,41.5 15,40.5 16.8,37.9 C17.8,36 17.8,34 17.6,33.2 C17,31 16,29.5 15.8,27 C15,25 14.5,23 14.9,22.2 C15.5,21 15.7,20 15.7,19.6 L15.9,9 C16.5,6 18,4.8 19.8,4.3 L29.9,3.5 L30.8,4.8 C33,6 34.2,7.5 34.2,8.6 L35,14.1 C35.5,17 35.8,20 35.7,21.3 C35.5,24 34.5,25.5 34.2,26.8 C33.5,29 33.3,31 33.3,32.3 C33.3,34.5 33.5,36 33.8,37.4 C35,39.5 37,41 38.4,41.7 L42.2,43.8 L51,52 L0,52 Z" fill="#fff"/></g></svg>
<div class="t" style="left:381.0px;top:1063.8px;font-size:22.7px;color:#1f3e6d;font-weight:400;-webkit-text-stroke:0.35px currentColor;">Світличний</div>
<div class="t" style="left:381.0px;top:1096.9px;font-size:22.5px;color:#1f3e6d;font-weight:400;-webkit-text-stroke:0.35px currentColor;">Владислав</div>
<div class="r" style="left:630px;top:1060px;width:24px;height:24px;background:#c3c3c3;border-radius:50%"></div>
<div class="t" style="left:770.0px;top:1063.9px;font-size:22.5px;color:#4a4f55;font-weight:400;-webkit-text-stroke:0.35px currentColor;">Рядовий</div>
<div class="t" style="left:770.0px;top:1096.9px;font-size:22.5px;color:#4a4f55;font-weight:400;-webkit-text-stroke:0.35px currentColor;">співробітник</div>
<div class="t" style="left:942.0px;top:1063.7px;font-size:22.8px;color:#1f3e6d;font-weight:400;-webkit-text-stroke:0.35px currentColor;">test2@perfectum.ua</div>
<div class="t" style="left:1663.0px;top:1063.9px;font-size:22.5px;color:#4a4f55;font-weight:400;-webkit-text-stroke:0.35px currentColor;">3 місяці назад</div>
<div class="r" style="left:1663px;top:1090px;width:149px;height:1px;border-top:1px dashed #a9adb2;height:0"></div>
<div class="r" style="left:1921px;top:1060px;width:24px;height:24px;background:#c3c3c3;border-radius:50%"></div>
<div class="r" style="left:2025px;top:1057px;width:80px;height:32px;background:#74bd27;border-radius:16px"></div>
<div class="r" style="left:2074px;top:1058px;width:30px;height:30px;background:#fff;border-radius:50%;box-shadow:0 0 0 1px #74bd27"></div>
<div class="t" style="left:2196.0px;top:1063.9px;font-size:22.5px;color:#4a4f55;font-weight:400;-webkit-text-stroke:0.35px currentColor;">3 місяці назад</div>
<div class="r" style="left:2196px;top:1090px;width:149px;height:1px;border-top:1px dashed #a9adb2;height:0"></div>
<svg class="r" style="left:304px;top:980px;" width="36" height="36" viewBox="0 0 36 36"><path d="M6.2,19.3 C9.5,13.5 13.5,11.1 17.6,11.1 C21.7,11.1 25.7,13.5 29,19.3 C25.7,25 21.7,27.4 17.6,27.4 C13.5,27.4 9.5,25 6.2,19.3 Z" fill="none" stroke="#1f3e6d" stroke-width="2.2" stroke-linejoin="round"/><circle cx="17.6" cy="19.3" r="2.9" fill="none" stroke="#1f3e6d" stroke-width="2.2"/></svg>
<svg class="r" style="left:349.5px;top:982.5px;" width="34" height="34" viewBox="0 0 34 34"><path d="M6.5,27.5 V22 L20.7,7.8 A2,2 0 0 1 23.5,7.8 L26.2,10.5 A2,2 0 0 1 26.2,13.3 L12,27.5 Z" fill="none" stroke="#1f3e6d" stroke-width="2.2" stroke-linejoin="round"/></svg>
<svg class="r" style="left:396px;top:985px;" width="30" height="30" viewBox="0 0 30 30"><path d="M8,7 L22.6,21.6 M22.6,7 L8,21.6" stroke="#d9475f" stroke-width="2"/></svg>
<div class="r" style="left:304px;top:754px;width:293px;height:94px;border:5px solid #f00;box-sizing:border-box;"></div>
<div class="t" style="left:539.0px;top:779.6px;font-size:43px;color:#e3242b;font-weight:400;">9</div>
<div class="r" style="left:294px;top:974px;width:53px;height:80px;border:5px solid #f00;box-sizing:border-box;"></div>
<div class="r" style="left:342px;top:974px;width:53px;height:80px;border:5px solid #f00;box-sizing:border-box;"></div>
<div class="r" style="left:390px;top:974px;width:53px;height:80px;border:5px solid #f00;box-sizing:border-box;"></div>
<svg class="r" style="left:0;top:0" width="2874" height="1578"><path d="M311,1015.8 V1046 H307 V1024.5 H300 V1021.3 H302 C304.5,1021.3 306.4,1019.8 307,1015.8 Z" fill="#e3242b"/></svg>
<div class="t" style="left:319.0px;top:1010.0px;font-size:42.5px;color:#e3242b;font-weight:400;">0</div>
<svg class="r" style="left:0;top:0" width="2874" height="1578"><path d="M360.7,1015.8 V1046 H356.7 V1024.5 H349.7 V1021.3 H351.7 C354.2,1021.3 356.09999999999997,1019.8 356.7,1015.8 Z" fill="#e3242b"/></svg>
<svg class="r" style="left:0;top:0" width="2874" height="1578"><path d="M381,1015.8 V1046 H377 V1024.5 H370 V1021.3 H372 C374.5,1021.3 376.4,1019.8 377,1015.8 Z" fill="#e3242b"/></svg>
<svg class="r" style="left:0;top:0" width="2874" height="1578"><path d="M406.8,1015.8 V1046 H402.8 V1024.5 H395.8 V1021.3 H397.8 C400.3,1021.3 402.2,1019.8 402.8,1015.8 Z" fill="#e3242b"/></svg>
<div class="t" style="left:416.0px;top:1010.0px;font-size:42.5px;color:#e3242b;font-weight:400;">2</div>
<div class="t" style="left:220.5px;top:1262.4px;font-size:22px;color:#4d5258;font-weight:700;">Показано 1 до 3 з 3</div>
<div class="r" style="left:2502px;top:1248px;width:176px;height:50px;border:1px solid #dadde1;border-radius:6px;box-sizing:border-box;background:#fff"></div>
<div class="r" style="left:2563px;top:1248px;width:54px;height:50px;background:#2d69c4"></div>
<div class="t" style="left:2583.0px;top:1261.9px;font-size:22.5px;color:#fff;font-weight:400;">1</div>
<svg class="r" style="left:2522px;top:1260px;" width="24" height="26" viewBox="0 0 24 26"><path d="M14.5,6 L8.5,12.5 L14.5,19" fill="none" stroke="#4a4f55" stroke-width="2"/></svg>
<svg class="r" style="left:2636px;top:1260px;" width="24" height="26" viewBox="0 0 24 26"><path d="M8.5,6 L14.5,12.5 L8.5,19" fill="none" stroke="#4a4f55" stroke-width="2"/></svg>
</body></html>
